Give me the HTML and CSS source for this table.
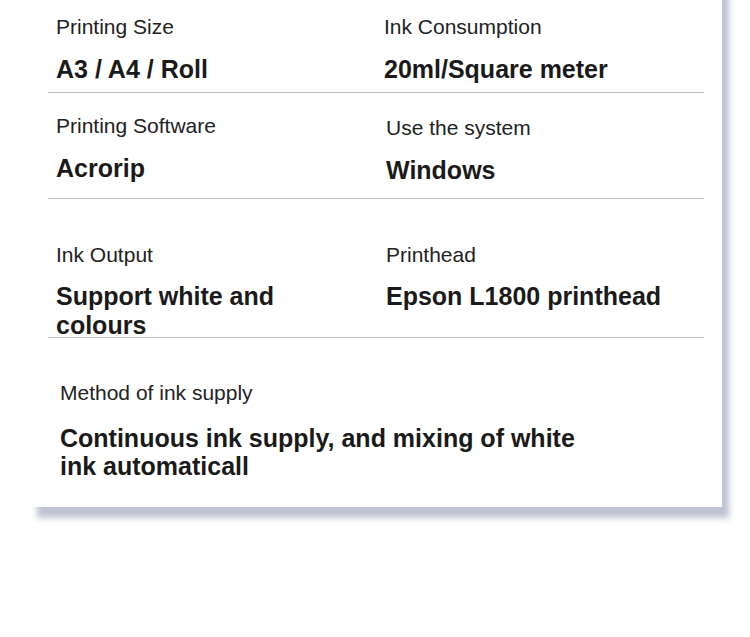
FILE: index.html
```html
<!DOCTYPE html>
<html lang="en">
<head>
<meta charset="utf-8">
<title>Specifications</title>
<link rel="stylesheet" href="styles.css">
</head>
<body>
<div class="page">
  <div class="card">
    <div class="row row-1">
      <div class="cell">
        <div class="label">Printing Size</div>
        <div class="value">A3 / A4 / Roll</div>
      </div>
      <div class="cell">
        <div class="label">Ink Consumption</div>
        <div class="value">20ml/Square meter</div>
      </div>
    </div>
    <div class="row row-2">
      <div class="cell">
        <div class="label">Printing Software</div>
        <div class="value">Acrorip</div>
      </div>
      <div class="cell cell-low">
        <div class="label">Use the system</div>
        <div class="value">Windows</div>
      </div>
    </div>
    <div class="row row-3">
      <div class="cell">
        <div class="label">Ink Output</div>
        <div class="value value-narrow">Support white and colours</div>
      </div>
      <div class="cell">
        <div class="label">Printhead</div>
        <div class="value">Epson L1800 printhead</div>
      </div>
    </div>
    <div class="row row-4">
      <div class="cell cell-wide">
        <div class="label">Method of ink supply</div>
        <div class="value value-long">Continuous ink supply, and mixing of white ink automaticall</div>
      </div>
    </div>
  </div>
</div>
</body>
</html>
```
FILE: styles.css
```css
* {
  box-sizing: border-box;
}

html, body {
  margin: 0;
  padding: 0;
  background: #ffffff;
}

body {
  font-family: "Liberation Sans", Arial, Helvetica, sans-serif;
  color: #1e1e1e;
}

.page {
  min-height: 637px;
  padding: 0 0 0 30px;
  overflow: hidden;
}

.card {
  width: 692px;
  margin-top: -20px;
  padding: 20px 18px 0;
  background: #ffffff;
  box-shadow: 7px 11px 6px #bfc3d3;
}

.row {
  display: grid;
  grid-template-columns: 1fr 1fr;
  align-items: start;
  border-bottom: 1px solid #bcbcbc;
}

.cell {
  padding-left: 8px;
}

.label {
  font-size: 21px;
  line-height: 25px;
  color: #222222;
}

.value {
  margin-top: 16px;
  font-size: 25px;
  line-height: 29px;
  font-weight: 700;
  color: #1a1a1a;
}

.row-1 {
  padding: 14px 0 8px;
}

.row-2 {
  padding: 20px 0 13px;
}

.cell-low {
  padding-top: 2px;
  padding-left: 10px;
}

.row-3 {
  padding: 43px 0 0;
}

.row-3 .value {
  margin-top: 15px;
  margin-bottom: -3px;
}

.row-3 .cell + .cell {
  padding-left: 10px;
}

.value-narrow {
  max-width: 240px;
}

.row-4 {
  grid-template-columns: 1fr;
  border-bottom: none;
  padding: 42px 0 27px;
}

.cell-wide {
  padding-left: 12px;
}

.row-4 .value {
  margin-top: 19px;
  line-height: 28px;
}

.value-long {
  max-width: 530px;
}
```
